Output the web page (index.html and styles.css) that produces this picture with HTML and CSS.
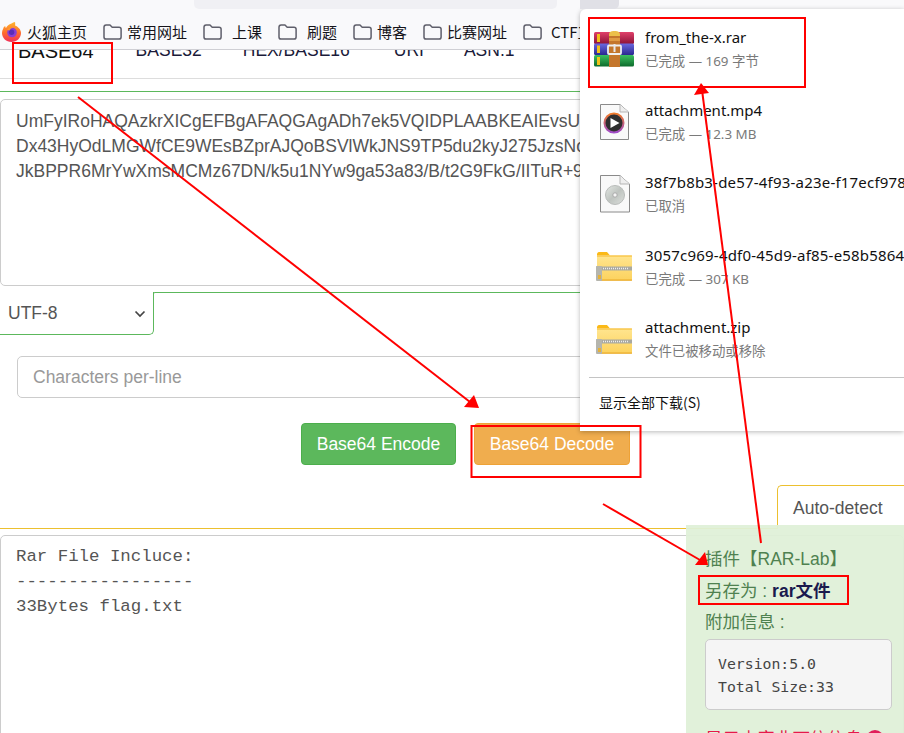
FILE: index.html
```html
<!DOCTYPE html>
<html lang="zh-CN">
<head>
<meta charset="utf-8">
<title>Base64</title>
<link rel="stylesheet" href="styles.css">
</head>
<body>
<svg class="defs" width="0" height="0" aria-hidden="true">
  <defs>
    <symbol id="folder" viewBox="0 0 19 16">
      <path d="M1 3.2C1 2 1.9 1 3.1 1H7l2.2 2.2H16c1.2 0 2.1.9 2.1 2.1v7.6c0 1.2-.9 2.1-2.1 2.1H3.1C1.9 15 1 14.1 1 12.9z" fill="none" stroke="#5f5f6b" stroke-width="1.5" stroke-linejoin="round"/>
    </symbol>
    <linearGradient id="zipBody" x1="0" y1="0" x2="0" y2="1">
      <stop offset="0" stop-color="#ffe58f"/>
      <stop offset="1" stop-color="#fcd25e"/>
    </linearGradient>
    <symbol id="zip" viewBox="0 0 36 29">
      <path d="M1 2.5C1 1 1.8 0 3 0h8l3 3.5H1z" fill="#fbb917"/>
      <rect x="1" y="3.5" width="35" height="25" rx="1" fill="url(#zipBody)"/>
      <rect x="1" y="3.5" width="35" height="1" fill="#f5b72c"/>
      <rect x="1" y="27.5" width="35" height="1.2" fill="#e9a927"/>
      <rect x="0" y="14.5" width="36" height="4" fill="#a9a9a0"/>
      <path d="M5 16.5h27" stroke="#eee" stroke-width="1.4" stroke-dasharray="1 1"/>
      <rect x="0" y="14" width="6" height="15" rx="1" fill="#b5b5ad"/>
      <rect x="2" y="23" width="3" height="4" fill="#e5b23a"/>
    </symbol>
    <linearGradient id="bookRed" x1="0" y1="0" x2="0" y2="1"><stop offset="0" stop-color="#e0406a"/><stop offset="1" stop-color="#8c1338"/></linearGradient>
    <linearGradient id="bookBlue" x1="0" y1="0" x2="0" y2="1"><stop offset="0" stop-color="#6a68e0"/><stop offset="1" stop-color="#2a2890"/></linearGradient>
    <linearGradient id="bookGreen" x1="0" y1="0" x2="0" y2="1"><stop offset="0" stop-color="#3cc060"/><stop offset="1" stop-color="#0d6b2c"/></linearGradient>
    <linearGradient id="ring" x1="0" y1="0" x2="0" y2="1"><stop offset="0" stop-color="#f07a2a"/><stop offset="1" stop-color="#a04cc8"/></linearGradient>
    <linearGradient id="disc" x1="0" y1="0" x2="1" y2="1"><stop offset="0" stop-color="#e4e8e4"/><stop offset=".5" stop-color="#bfc4c0"/><stop offset="1" stop-color="#dcdfdc"/></linearGradient>
    <linearGradient id="fox" x1="0" y1="0" x2="0" y2="1"><stop offset="0" stop-color="#ffb62e"/><stop offset=".55" stop-color="#ff6a2c"/><stop offset="1" stop-color="#f0305c"/></linearGradient>
  </defs>
</svg>

<header class="chrome">
  <div class="chrome-top"><div class="address"></div></div>
  <nav class="bookmarks">
    <a class="mark home">
      <svg class="fox" width="19" height="20" viewBox="0 0 19 20">
        <path d="M9.500 1.500c1-.8 2.500-1.300 3.500-1.500.3 1.500.3 2.800 0 3.500 3.500 1.500 6 4.200 6 7.500 0 5-4.200 9-9.500 9S0 16 0 11c0-1.500.4-3 1.200-4.300C1.500 5.500 2.300 4.500 3.200 4c0 1 .3 1.600.8 2C5 3.800 7 2.300 9.500 1.500z" fill="url(#fox)"/>
        <circle cx="10" cy="10.500" r="4.800" fill="#8a3fd4"/>
        <circle cx="9.600" cy="10.300" r="2.700" fill="#5a2cb8"/>
        <path d="M5 8c1.500-2 4-3 6.500-2.500C9.500 5.800 8 7 7.500 8.500z" fill="#ff9a2e"/>
      </svg>
      <span>火狐主页</span>
    </a>
    <a class="mark m1"><svg class="fold" width="19" height="16"><use href="#folder"/></svg><span>常用网址</span></a>
    <a class="mark m2"><svg class="fold" width="19" height="16"><use href="#folder"/></svg><span>上课</span></a>
    <a class="mark m3"><svg class="fold" width="19" height="16"><use href="#folder"/></svg><span>刷题</span></a>
    <a class="mark m4"><svg class="fold" width="19" height="16"><use href="#folder"/></svg><span>博客</span></a>
    <a class="mark m5"><svg class="fold" width="19" height="16"><use href="#folder"/></svg><span>比赛网址</span></a>
    <a class="mark m6"><svg class="fold" width="19" height="16"><use href="#folder"/></svg><span>CTF工具</span></a>
  </nav>
</header>

<main class="page">
  <div class="tabs">
    <a class="tab active">BASE64</a>
    <a class="tab">BASE32</a>
    <a class="tab">HEX/BASE16</a>
    <a class="tab">URI</a>
    <a class="tab">ASN.1</a>
  </div>

  <section class="encoder">
    <div class="source">
      <div>UmFyIRoHAQAzkrXICgEFBgAFAQGAgADh7ek5VQIDPLAABKEAIEvsU</div>
      <div>Dx43HyOdLMGWfCE9WEsBZprAJQoBSVlWkJNS9TP5du2kyJ275JzsNo</div>
      <div>JkBPPR6MrYwXmsMCMz67DN/k5u1NYw9ga53a83/B/t2G9FkG/IITuR+9</div>
    </div>
    <div class="charset-row">
      <div class="charset"><span>UTF-8</span>
        <svg width="12" height="8" viewBox="0 0 12 8"><path d="M1.500 1.500 6 6l4.500-4.500" fill="none" stroke="#444" stroke-width="1.700"/></svg>
      </div>
      <div class="charset-rest"></div>
    </div>
    <div class="perline">Characters per-line</div>
    <div class="actions">
      <button class="btn encode">Base64 Encode</button>
      <button class="btn decode">Base64 Decode</button>
    </div>
  </section>

  <div class="result-tabs"><div class="auto">Auto-detect</div></div>
  <div class="output">
    <div>Rar File Incluce:</div>
    <div>-----------------</div>
    <div>33Bytes flag.txt</div>
  </div>
</main>

<aside class="alert">
  <div class="alert-line">插件【RAR-Lab】</div>
  <div class="alert-line">另存为 : <b class="strong">rar文件</b></div>
  <div class="alert-line">附加信息 :</div>
  <pre class="extra">Version:5.0
Total Size:33</pre>
  <div class="warn"><span>显示内容非可信信息</span><i class="dot"></i></div>
</aside>

<aside class="downloads">
  <div class="dl-item">
    <svg class="dl-icon" width="40" height="36" viewBox="0 0 40 36">
      <rect x="0" y="1" width="40" height="12" rx="1.500" fill="url(#bookRed)"/>
      <rect x="0" y="12.500" width="40" height="11.500" rx="1.500" fill="url(#bookBlue)"/>
      <rect x="0" y="24" width="40" height="11.500" rx="1.500" fill="url(#bookGreen)"/>
      <rect x="3" y="3" width="3" height="8" fill="#f2c21a"/>
      <rect x="3" y="14.500" width="3" height="7.500" fill="#f2c21a"/>
      <rect x="3" y="26" width="3" height="8" fill="#f2c21a"/>
      <path d="M15 4c0-3 1.500-4 5.500-4S26 1 26 4v2H15z" fill="#ecc04a"/>
      <rect x="15" y="5" width="11" height="31" fill="#c4762c"/>
      <rect x="15" y="7" width="11" height="3" fill="#e09a44"/>
      <rect x="14" y="14.500" width="13" height="8.500" rx="1" fill="none" stroke="#f0f0f0" stroke-width="1.800"/>
      <rect x="19.500" y="13" width="2" height="8" fill="#e8e8e8"/>
    </svg>
    <div class="dl-text"><div class="dl-name">from_the-x.rar</div><div class="dl-status">已完成 — 169 字节</div></div>
  </div>
  <div class="dl-item">
    <svg class="dl-icon" width="40" height="36" viewBox="0 0 40 36">
      <path d="M6.500.500H26L34.500 8v27.500h-28z" fill="#f9f9f9" stroke="#8a8a8a"/>
      <path d="M26 .500V8h8.500" fill="#eee" stroke="#b5b5b5"/>
      <circle cx="20" cy="19" r="9.500" fill="#2f2f2f" stroke="url(#ring)" stroke-width="2"/>
      <path d="M16.500 14 25.500 19l-9 5z" fill="#fff"/>
    </svg>
    <div class="dl-text"><div class="dl-name">attachment.mp4</div><div class="dl-status">已完成 — 12.3 MB</div></div>
  </div>
  <div class="dl-item">
    <svg class="dl-icon" width="40" height="38" viewBox="0 0 40 38">
      <path d="M6.500.500H26L35.500 9v28h-29z" fill="#f9f9f9" stroke="#8a8a8a"/>
      <path d="M26 .500V9h9.500" fill="#eee" stroke="#b5b5b5"/>
      <circle cx="21" cy="20" r="9.500" fill="url(#disc)" stroke="#b9bcba"/>
      <circle cx="21" cy="20" r="2.200" fill="#f5f5f5" stroke="#aaa"/>
    </svg>
    <div class="dl-text"><div class="dl-name dl-long">38f7b8b3-de57-4f93-a23e-f17ecf978</div><div class="dl-status">已取消</div></div>
  </div>
  <div class="dl-item">
    <svg class="dl-icon" width="40" height="29"><use href="#zip" width="36" height="29" x="2"/></svg>
    <div class="dl-text"><div class="dl-name dl-long">3057c969-4df0-45d9-af85-e58b5864</div><div class="dl-status">已完成 — 307 KB</div></div>
  </div>
  <div class="dl-item">
    <svg class="dl-icon" width="40" height="29"><use href="#zip" width="36" height="29" x="2"/></svg>
    <div class="dl-text"><div class="dl-name">attachment.zip</div><div class="dl-status">文件已被移动或移除</div></div>
  </div>
  <div class="dl-all">显示全部下载(S)</div>
</aside>
<div class="dl-tab"></div>

<svg class="marks" width="904" height="733" viewBox="0 0 904 733" aria-hidden="true">
  <g fill="none" stroke="#f00" stroke-width="2">
    <rect x="13" y="43" width="99" height="40"/>
    <rect x="471.500" y="426" width="169" height="51"/>
    <rect x="589" y="18" width="216" height="69"/>
    <rect x="699" y="576" width="149" height="28"/>
    <path d="M78 97 470 402"/>
    <path d="M603 504 700 560"/>
    <path d="M761 543 702 90"/>
  </g>
  <g fill="#f00">
    <path d="M479 408 464 407 474 395z"/>
    <path d="M708 565 695 565 705 552z"/>
    <path d="M701 83 694 95 709 93z"/>
  </g>
</svg>
</body>
</html>
```

FILE: styles.css
```css
* { box-sizing: border-box; }
html, body { margin: 0; padding: 0; }
body {
  width: 904px;
  height: 733px;
  overflow: hidden;
  position: relative;
  background: #fff;
  font-family: "Liberation Sans", Arial, "Noto Sans CJK SC", sans-serif;
  font-size: 17.5px;
  color: #555;
}
.defs { position: absolute; }

/* browser chrome */
.chrome {
  height: 50px;
  background: #f9f9fb;
  border-bottom: 1px solid #cfcfd4;
  font-family: "Noto Sans CJK SC", sans-serif;
  font-size: 15px;
  color: #15141a;
}
.chrome-top { height: 21px; padding-left: 194px; }
.address { width: 363px; height: 9px; background: #f0f0f4; border-radius: 0 0 5px 5px; }
.bookmarks { display: flex; height: 21px; align-items: center; white-space: nowrap; }
.mark { display: flex; align-items: center; flex: none; }
.home { width: 103px; padding-left: 2px; gap: 6px; }
.m1 { width: 100px; gap: 5px; }
.m2 { width: 75px; gap: 10px; }
.m3 { width: 75px; gap: 10px; }
.m4 { width: 70px; gap: 5px; }
.m5 { width: 100px; gap: 5px; }
.m6 { gap: 9px; }

/* tabs, clipped by the browser bar */
.tabs {
  height: 29px;
  display: flex;
  overflow: hidden;
  border-bottom: 1px solid #ddd;
  color: #1b1b3a;
  font-size: 17.5px;
  margin-bottom: 12px;
}
.tab { flex: none; margin-top: -10px; line-height: 20px; padding-left: 41px; }
.tab:nth-child(1) { padding-left: 18px; margin-top: -9px; color: #111; font-size: 20px; line-height: 21px; }
.tab:nth-child(2) { padding-left: 42px; }
.tab:nth-child(4) { padding-left: 44px; }
.tab:nth-child(5) { padding-left: 40px; }

.encoder { border-top: 1px solid #5cb85c; padding-top: 7px; }
.source {
  height: 187px;
  border: 1px solid #ccc;
  border-radius: 5px;
  padding: 9px 15px;
  line-height: 25px;
  white-space: nowrap;
  overflow: hidden;
  color: #555;
}
.charset-row { display: flex; margin-top: 6px; height: 43px; }
.charset {
  width: 154px;
  flex: none;
  display: flex;
  align-items: center;
  justify-content: space-between;
  padding: 1px 7px 0 8px;
  border-right: 1px solid #5cb85c;
  border-bottom: 1px solid #5cb85c;
  border-bottom-right-radius: 5px;
}
.charset-rest { flex: 1; border-top: 1px solid #5cb85c; border-left: 1px solid #5cb85c; border-top-left-radius: 5px; margin-left: -1px; height: 2px; }
.perline {
  margin: 21px 0 0 17px;
  width: 800px;
  height: 42px;
  line-height: 40px;
  padding-left: 15px;
  border: 1px solid #ccc;
  border-radius: 5px;
  color: #999;
}
.actions { display: flex; gap: 18px; margin-top: 25px; padding-left: 301px; }
.btn {
  height: 42px;
  width: 155px;
  padding: 0;
  border: 1px solid transparent;
  border-radius: 4px;
  font: inherit;
  color: #fff;
}
.encode { background: #5cb85c; border-color: #4cae4c; }
.decode { background: #f0ad4e; border-color: #eea236; width: 156px; }

.result-tabs {
  margin-top: 20px;
  height: 44px;
  border-bottom: 1px solid #ecc02f;
  display: flex;
  padding-left: 777px;
}
.auto {
  flex: 1;
  height: 44px;
  padding-left: 15px;
  line-height: 44px;
  border: 1px solid #ecc02f;
  border-bottom: 0;
  border-right: 0;
  border-top-left-radius: 5px;
  background: #fff;
}
.output {
  margin-top: 6px;
  height: 210px;
  border: 1px solid #ccc;
  border-radius: 5px;
  padding: 8px 15px;
  font-family: "Liberation Mono", "Courier New", monospace;
  font-size: 17.4px;
  line-height: 25px;
  color: #555;
}

/* plugin alert over the result */
.alert {
  position: absolute;
  left: 686px;
  top: 525px;
  width: 218px;
  height: 208px;
  overflow: hidden;
  padding: 19px 12px 0 19px;
  background: rgba(223, 240, 216, .94);
  color: #4f8150;
  line-height: 31.500px;
}
.alert-line { white-space: nowrap; }
.strong { color: #1a1a4e; font-weight: 700; }
.extra {
  margin: 0;
  height: 71px;
  padding: 12px;
  background: #f5f5f5;
  border: 1px solid #ccc;
  border-radius: 5px;
  font-family: "DejaVu Sans Mono", monospace;
  font-size: 14.800px;
  line-height: 23px;
  color: #444;
}
.warn { display: flex; align-items: center; gap: 3px; margin-top: 14px; color: #e6194b; white-space: nowrap; }
.dot { width: 18px; height: 18px; border-radius: 50%; background: #e01e5a; flex: none; }

/* download panel */
.dl-tab {
  position: absolute;
  left: 580px;
  top: 0;
  width: 39px;
  height: 9px;
  background: #e0e0e6;
  border-bottom-right-radius: 5px;
}
.downloads {
  position: absolute;
  left: 580px;
  top: 9px;
  width: 324px;
  height: 422px;
  overflow: hidden;
  padding: 4px 0 0 9px;
  background: #fff;
  border-top-left-radius: 6px;
  box-shadow: 0 1px 5px rgba(0, 0, 0, .28);
  font-family: "Noto Sans", "Noto Sans CJK SC", sans-serif;
  color: #111;
}
.dl-item { display: flex; align-items: center; height: 72.500px; white-space: nowrap; }
.dl-icon { flex: none; margin: 0 11px 0 5px; width: 40px; }
.dl-name { font-size: 15px; line-height: 24px; }
.dl-long { letter-spacing: .2px; }
.dl-status { font-size: 13.400px; line-height: 24px; color: #7a7a7a; }
.dl-all {
  margin-top: 1.500px;
  border-top: 1px solid #c4c4c4;
  padding: 12px 0 0 10px;
  font-size: 14px;
  line-height: 24px;
  font-family: "Noto Sans CJK SC", sans-serif;
}

/* annotations drawn over the capture */
.marks { position: absolute; left: 0; top: 0; pointer-events: none; }
```
